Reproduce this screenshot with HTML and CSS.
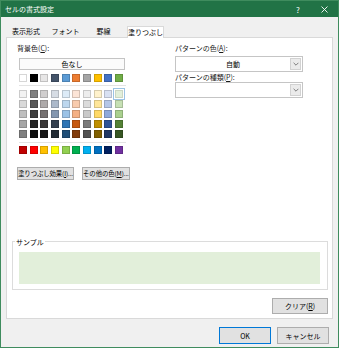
FILE: index.html
```html
<!DOCTYPE html>
<html lang="ja">
<head>
<meta charset="utf-8">
<title>セルの書式設定</title>
<link rel="stylesheet" href="styles.css">
</head>
<body>
<div class="window">
  <div class="titlebar">
    <span class="title">セルの書式設定</span>
    <span class="tb-btn">?</span>
    <span class="tb-btn"><svg class="close-icon" width="7" height="7" viewBox="0 0 7 7"><path d="M0.5 0.5 L6.5 6.5 M6.5 0.5 L0.5 6.5" stroke="#fff" stroke-width="0.9" fill="none"/></svg></span>
  </div>
  <div class="tabs">
    <div class="tab tab-1">表示形式</div>
    <div class="tab tab-2">フォント</div>
    <div class="tab tab-3">罫線</div>
    <div class="tab tab-active">塗りつぶし</div>
  </div>
  <div class="panel">
    <div class="top">
      <div class="col-left">
        <div class="label">背景色(<u>C</u>):</div>
        <div class="btn btn-none">色なし</div>
        <div class="swatches swatches-base">
          <span class="swatch" style="background:#FFFFFF"></span>
          <span class="swatch" style="background:#000000"></span>
          <span class="swatch" style="background:#E7E6E6"></span>
          <span class="swatch" style="background:#44546A"></span>
          <span class="swatch" style="background:#5B9BD5"></span>
          <span class="swatch" style="background:#ED7D31"></span>
          <span class="swatch" style="background:#A5A5A5"></span>
          <span class="swatch" style="background:#FFC000"></span>
          <span class="swatch" style="background:#4472C4"></span>
          <span class="swatch" style="background:#70AD47"></span>
        </div>
        <div class="sep sep-1"></div>
        <div class="swatches swatches-theme">
          <span class="swatch" style="background:#F2F2F2"></span>
          <span class="swatch" style="background:#808080"></span>
          <span class="swatch" style="background:#D0CECE"></span>
          <span class="swatch" style="background:#D6DCE4"></span>
          <span class="swatch" style="background:#DDEBF7"></span>
          <span class="swatch" style="background:#FCE4D6"></span>
          <span class="swatch" style="background:#EDEDED"></span>
          <span class="swatch" style="background:#FFF2CC"></span>
          <span class="swatch" style="background:#D9E1F2"></span>
          <span class="swatch swatch-selected" style="background:#E2EFDA"></span>

          <span class="swatch" style="background:#D9D9D9"></span>
          <span class="swatch" style="background:#595959"></span>
          <span class="swatch" style="background:#AEAAAA"></span>
          <span class="swatch" style="background:#ACB9CA"></span>
          <span class="swatch" style="background:#BDD7EE"></span>
          <span class="swatch" style="background:#F8CBAD"></span>
          <span class="swatch" style="background:#DBDBDB"></span>
          <span class="swatch" style="background:#FFE699"></span>
          <span class="swatch" style="background:#B4C6E7"></span>
          <span class="swatch" style="background:#C6E0B4"></span>

          <span class="swatch" style="background:#BFBFBF"></span>
          <span class="swatch" style="background:#404040"></span>
          <span class="swatch" style="background:#757171"></span>
          <span class="swatch" style="background:#8497B0"></span>
          <span class="swatch" style="background:#9BC2E6"></span>
          <span class="swatch" style="background:#F4B084"></span>
          <span class="swatch" style="background:#C9C9C9"></span>
          <span class="swatch" style="background:#FFD966"></span>
          <span class="swatch" style="background:#8EA9DB"></span>
          <span class="swatch" style="background:#A9D08E"></span>

          <span class="swatch" style="background:#A6A6A6"></span>
          <span class="swatch" style="background:#262626"></span>
          <span class="swatch" style="background:#3A3838"></span>
          <span class="swatch" style="background:#333F4F"></span>
          <span class="swatch" style="background:#2F75B5"></span>
          <span class="swatch" style="background:#C65911"></span>
          <span class="swatch" style="background:#7B7B7B"></span>
          <span class="swatch" style="background:#BF8F00"></span>
          <span class="swatch" style="background:#305496"></span>
          <span class="swatch" style="background:#548235"></span>

          <span class="swatch" style="background:#808080"></span>
          <span class="swatch" style="background:#0D0D0D"></span>
          <span class="swatch" style="background:#171616"></span>
          <span class="swatch" style="background:#222B35"></span>
          <span class="swatch" style="background:#1F4E78"></span>
          <span class="swatch" style="background:#833C0C"></span>
          <span class="swatch" style="background:#525252"></span>
          <span class="swatch" style="background:#806000"></span>
          <span class="swatch" style="background:#203764"></span>
          <span class="swatch" style="background:#375623"></span>
        </div>
        <div class="sep sep-2"></div>
        <div class="swatches swatches-standard">
          <span class="swatch" style="background:#C00000"></span>
          <span class="swatch" style="background:#FF0000"></span>
          <span class="swatch" style="background:#FFC000"></span>
          <span class="swatch" style="background:#FFFF00"></span>
          <span class="swatch" style="background:#92D050"></span>
          <span class="swatch" style="background:#00B050"></span>
          <span class="swatch" style="background:#00B0F0"></span>
          <span class="swatch" style="background:#0070C0"></span>
          <span class="swatch" style="background:#002060"></span>
          <span class="swatch" style="background:#7030A0"></span>
        </div>
        <div class="btn-row">
          <div class="btn btn-gray btn-effect">塗りつぶし効果(<u>I</u>)...</div>
          <div class="btn btn-gray btn-more">その他の色(<u>M</u>)...</div>
        </div>
      </div>
      <div class="col-right">
        <div class="label">パターンの色(<u>A</u>):</div>
        <div class="select">
          <span class="select-text">自動</span>
          <span class="select-arrow"><svg width="6" height="4" viewBox="0 0 6 4"><path d="M0.6 0.8 L3 3.2 L5.4 0.8" fill="none" stroke="#707070" stroke-width="0.9"/></svg></span>
        </div>
        <div class="label label-2">パターンの種類(<u>P</u>):</div>
        <div class="select">
          <span class="select-text"></span>
          <span class="select-arrow"><svg width="6" height="4" viewBox="0 0 6 4"><path d="M0.6 0.8 L3 3.2 L5.4 0.8" fill="none" stroke="#707070" stroke-width="0.9"/></svg></span>
        </div>
      </div>
    </div>
    <div class="group">
      <span class="group-label">サンプル</span>
      <div class="sample"></div>
    </div>
    <div class="btn btn-gray btn-clear">クリア(<u>R</u>)</div>
  </div>
  <div class="footer">
    <div class="btn btn-gray btn-ok">OK</div>
    <div class="btn btn-gray btn-cancel">キャンセル</div>
  </div>
</div>
</body>
</html>
```

FILE: styles.css
```css
* { box-sizing: border-box; }
html, body { margin: 0; padding: 0; }
body {
  width: 339px;
  height: 348px;
  font-family: "Noto Sans CJK JP", "Noto Sans", sans-serif;
  font-size: 7px;
  color: #000;
  background: #fff;
  overflow: hidden;
}
u { text-decoration-thickness: 1px; text-underline-offset: 1px; }

.window {
  width: 339px;
  height: 348px;
  border: 1px solid #3f8c5e;
  background: #f0f0f0;
  display: flex;
  flex-direction: column;
}

.titlebar {
  flex: none;
  height: 16px;
  background: #217346;
  color: #fff;
  display: flex;
  align-items: center;
}
.title { flex: 1; padding-left: 4px; line-height: 16px; }
.tb-btn {
  width: 26px;
  height: 16px;
  display: flex;
  align-items: center;
  justify-content: center;
  font-size: 8px;
}
.tb-btn:last-child { margin-right: 1px; }

.tabs {
  flex: none;
  height: 20px;
  display: flex;
  align-items: flex-end;
  padding-left: 5px;
}
.tab { height: 11px; line-height: 11px; text-align: center; white-space: nowrap; }
.tab-1 { width: 40px; }
.tab-2 { width: 39px; }
.tab-3 { width: 37px; }
.tab-active {
  width: 37px;
  height: 12px;
  margin-left: 5px;
  margin-bottom: -1px;
  background: #fff;
  border: 1px solid #d9d9d9;
  border-bottom: 0;
  position: relative;
  z-index: 1;
}

.panel {
  flex: none;
  height: 282px;
  margin: 0 5px;
  background: #fff;
  border: 1px solid #d9d9d9;
  padding: 5px 0 4px 0;
  display: flex;
  flex-direction: column;
}

.top { display: flex; height: 137px; flex: none; }
.col-left { width: 110px; margin-left: 10px; display: flex; flex-direction: column; }
.col-right { width: 128px; margin-left: 48px; display: flex; flex-direction: column; }

.label { height: 10px; line-height: 10px; white-space: nowrap; color: #1a1a1a; }
.label-2 { height: 10px; }

.btn {
  display: flex;
  align-items: center;
  justify-content: center;
  white-space: nowrap;
  color: #000;
}
.btn-gray { background: #e1e1e1; border: 1px solid #adadad; }
.btn-none {
  margin: 5px 0 0 2px;
  width: 106px;
  height: 12px;
  background: #fbfbfb;
  border: 1px solid #c4c4c4;
}

.swatches {
  display: grid;
  grid-template-columns: repeat(10, 8px);
  justify-content: space-between;
  width: 104px;
  margin-left: 2px;
}
.swatches-base { margin-top: 4px; }
.swatches-theme { margin-top: 4px; row-gap: 2px; }
.swatches-standard { margin-top: 3px; }
.swatch {
  display: block;
  width: 8px;
  height: 8px;
  box-shadow: inset 0 0 0 1px rgba(0, 0, 0, 0.16);
}
.swatch-selected {
  box-shadow: inset 0 0 0 1px rgba(0, 0, 0, 0.1), 0 0 0 1px #ffffff, 0 0 0 2px #9cc3e5;
}

.sep { height: 1px; width: 107px; margin-left: 2px; background: #e3e3e3; }
.sep-1 { margin-top: 3px; }
.sep-2 { margin-top: 4px; }

.btn-row { display: flex; gap: 8px; margin-top: 13px; height: 13px; }
.btn-effect { width: 72px; height: 13px; font-size: 6.4px; letter-spacing: -0.1px; }
.btn-more { width: 61px; height: 13px; font-size: 6.4px; letter-spacing: -0.1px; }

.select {
  height: 16px;
  margin-top: 3px;
  background: #fff;
  border: 1px solid #c5c5c5;
  display: flex;
}
.label-2 + .select { margin-top: 0; }
.select-text { flex: 1; text-align: center; line-height: 14px; }
.select-arrow {
  width: 11px;
  margin: 1px 1px 1px 0;
  background: #ebebeb;
  border: 1px solid #d2d2d2;
  display: flex;
  align-items: center;
  justify-content: center;
}

.group {
  position: relative;
  flex: none;
  height: 49px;
  margin: 61px 4px 0 5px;
  border: 1px solid #dcdcdc;
  padding: 10px 7px 0 6px;
}
.group-label {
  position: absolute;
  left: 2px;
  top: -4px;
  line-height: 9px;
  padding: 0 1px;
  background: #fff;
}
.sample { width: 301px; height: 32px; background: #e2efda; }

.btn-clear {
  align-self: flex-end;
  width: 56px;
  height: 16px;
  margin: 8px 4px 0 0;
}

.footer {
  flex: 1;
  display: flex;
  justify-content: flex-end;
  align-items: flex-start;
  gap: 6px;
  padding: 8px 9px 0 0;
}
.btn-ok, .btn-cancel { width: 52px; height: 17px; }
.btn-ok { border-color: #0078d7; }
```
